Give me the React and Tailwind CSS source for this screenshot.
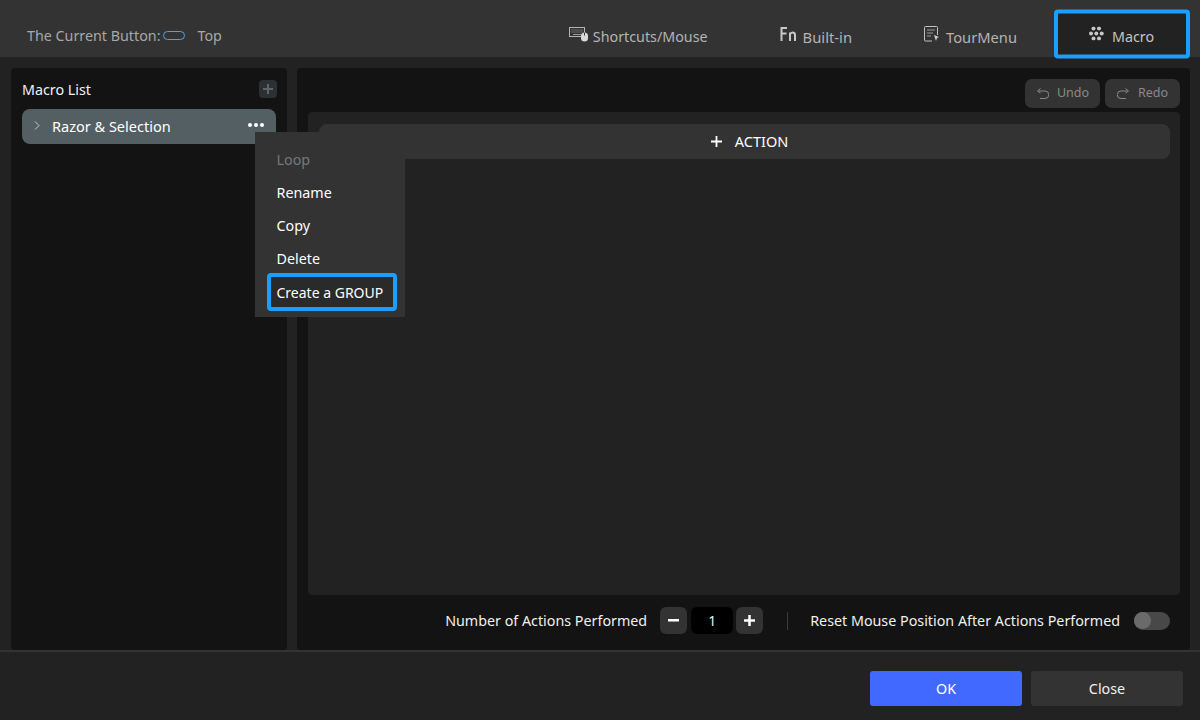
import React from "react";

const font = { fontFamily: '"Noto Sans", "Open Sans", sans-serif' };

function KeyboardMouseIcon() {
  return (
    <svg width="19" height="15" viewBox="0 0 19 15" fill="none">
      <rect x="0.5" y="0.5" width="15" height="9" fill="none" stroke="#b5b5b5" />
      <path d="M2.5 3h11M2.5 5h11" stroke="#9a9a9a" strokeDasharray="1 1" />
      <path d="M4 7.5h8" stroke="#9a9a9a" />
      <rect x="12" y="5.5" width="7" height="9" rx="3.5" fill="#d8d8d8" />
      <path d="M15.5 5.5v3" stroke="#333" />
    </svg>
  );
}

function FnIcon() {
  return (
    <svg width="17" height="14" viewBox="0 0 17 14" fill="none" stroke="#c8c8c8" strokeWidth="2">
      <path d="M1.5 14V1h5.500M1.500 6.500h5" />
      <path d="M10 14V5.500M10 7.500c0.500-1.300 1.400-2 2.700-2 1.600 0 2.300 1 2.300 2.500v6" />
    </svg>
  );
}

function TourIcon() {
  return (
    <svg width="16" height="16" viewBox="0 0 16 16" fill="none">
      <path d="M8 15H1.500a1 1 0 0 1-1-1V1.500a1 1 0 0 1 1-1h11a1 1 0 0 1 1 1V9" stroke="#c0c0c0" />
      <path d="M3 4h8M3 7h6M3 10h4" stroke="#9a9a9a" />
      <path d="M10 9l5 2-2 1-1 3z" fill="#d0d0d0" />
    </svg>
  );
}

function MacroIcon() {
  return (
    <svg width="15" height="14" viewBox="0 0 15 14" fill="#c8c8c8">
      <circle cx="4.500" cy="2" r="2" />
      <circle cx="10" cy="2" r="2" />
      <circle cx="2" cy="7" r="2" />
      <circle cx="7.300" cy="7" r="2" />
      <circle cx="12.700" cy="7" r="2" />
      <circle cx="4.500" cy="12" r="2" />
      <circle cx="10" cy="12" r="2" />
    </svg>
  );
}

function UndoIcon({ flip }) {
  return (
    <svg width="13" height="12" viewBox="0 0 13 12" fill="none" stroke="#8a8a8a" className={flip ? "-scale-x-100" : ""}>
      <path d="M3 3h6a3 3 0 0 1 0 7.500H4" />
      <path d="M4.500 0.500L1.500 3l3 2" />
    </svg>
  );
}

function Tab({ icon, label, gap, className }) {
  return (
    <div className={`flex translate-y-[1px] items-center text-[#b4b4b4] ${gap} ${className}`}>
      <span className="flex -translate-y-[3px]">{icon}</span>
      <span>{label}</span>
    </div>
  );
}

function Dots() {
  return (
    <div className="flex gap-[2px]">
      <span className="size-[4px] rounded-full bg-white" />
      <span className="size-[4px] rounded-full bg-white" />
      <span className="size-[4px] rounded-full bg-white" />
    </div>
  );
}

export default function App() {
  return (
    <div className="relative flex h-[720px] w-[1200px] flex-col overflow-hidden bg-[#222222] text-white" style={font}>
      <header className="flex h-[57px] shrink-0 items-center bg-[#333333] pt-[15px] pl-[27px] pr-[10px]">
        <div className="flex items-center text-[14.3px] text-[#a8a8a8]">
          <span>The Current Button:</span>
          <span className="ml-[2px] -translate-y-[1px] h-[9px] w-[22px] rounded-full border border-[#4aa3e8]" />
          <span className="ml-[13px]">Top</span>
        </div>
        <div className="ml-auto flex items-center">
          <Tab icon={<KeyboardMouseIcon />} label="Shortcuts/Mouse" gap="gap-[5px]" className="mr-[72px] text-[14.3px]" />
          <Tab icon={<FnIcon />} label="Built-in" gap="gap-[6px]" className="mr-[72px] text-[14.8px]" />
          <Tab icon={<TourIcon />} label="TourMenu" gap="gap-[6px]" className="mr-[37px] text-[14.7px]" />
          <div className="flex h-[49px] w-[136px] -translate-y-[2.5px] items-center justify-center gap-[8px] rounded-[4px] border-[4px] border-[#1a9fff] bg-[#222222] pt-[5px] pr-[1px] text-[14.3px] text-[#c4c4c4]">
            <span className="flex -translate-y-[3px]"><MacroIcon /></span>
            <span>Macro</span>
          </div>
        </div>
      </header>

      <main className="flex h-[593px] shrink-0 gap-[10px] px-[10px] pt-[11px] pb-[1px]">
        <aside className="relative h-[582px] w-[276px] shrink-0 rounded-[4px] bg-[#131313] ml-[1px] px-[11px]">
          <div className="flex h-[41px] items-center justify-between pt-[2px] text-[14.3px]">
            <span className="text-[#f0f0f0]">Macro List</span>
            <span className="-mr-[1px] -translate-y-[1px] flex size-[18px] items-center justify-center rounded-[4px] bg-[#2a3033]">
              <svg width="12" height="12" viewBox="0 0 12 12" stroke="#5f666a" strokeWidth="2"><path d="M6 1v10M1 6h10" /></svg>
            </span>
          </div>
          <div className="flex h-[35px] w-[254px] items-center rounded-[8px] bg-[#535f63] pl-[12px] pr-[12px] pt-[1px] text-[14.5px]">
            <svg width="6" height="9" viewBox="0 0 6 9" fill="none" stroke="#c4c9cb" className="-translate-y-[2px]"><path d="M1 0.500l4 4-4 4" /></svg>
            <span className="ml-[12px] text-white">Razor &amp; Selection</span>
            <span className="ml-auto -translate-y-[2px]"><Dots /></span>
          </div>
        </aside>

        <section className="flex h-[582px] min-w-0 flex-1 flex-col rounded-[4px] bg-[#131313] pl-[11px] pr-[10px]">
          <div className="flex h-[44px] shrink-0 items-center justify-end gap-[5px] pt-[6px]">
            <div className="flex h-[29px] w-[75px] items-center justify-center gap-[8px] rounded-[7px] bg-[#333333] pt-[1px] text-[12.5px] text-[#8a8a8a]"><UndoIcon /><span>Undo</span></div>
            <div className="flex h-[29px] w-[75px] items-center justify-center gap-[8px] rounded-[7px] bg-[#333333] pt-[1px] text-[12.5px] text-[#8a8a8a]"><UndoIcon flip /><span>Redo</span></div>
          </div>
          <div className="h-[483px] shrink-0 rounded-[4px] bg-[#222222] pl-[11px] pr-[10px] pt-[12px]">
            <div className="flex h-[35px] items-center justify-center gap-[13px] rounded-[8px] bg-[#333333] pl-[10px] text-[14.5px]">
              <svg width="11" height="11" viewBox="0 0 11 11" stroke="#ffffff" strokeWidth="1.800"><path d="M5.500 0v11M0 5.500h11" /></svg>
              <span>ACTION</span>
            </div>
          </div>
          <div className="flex flex-1 items-center justify-end pr-[10px] pb-[4px] text-[14.3px] text-[#f0f0f0]">
            <span>Number of Actions Performed</span>
            <span className="ml-[13px] flex size-[27px] items-center justify-center rounded-[6px] bg-[#333333]">
              <svg width="11" height="3" viewBox="0 0 11 3"><rect width="11" height="2.500" fill="#ffffff" /></svg>
            </span>
            <span className="ml-[4px] mr-[3px] flex h-[27px] w-[42px] items-center justify-center rounded-[6px] bg-black text-[14px]">1</span>
            <span className="flex size-[27px] items-center justify-center rounded-[6px] bg-[#333333]">
              <svg width="11" height="11" viewBox="0 0 11 11" stroke="#ffffff" strokeWidth="2.500"><path d="M5.500 0v11M0 5.500h11" /></svg>
            </span>
            <span className="ml-[24px] mr-[22px] h-[18px] w-[1px] bg-[#3a3a3a]" />
            <span>Reset Mouse Position After Actions Performed</span>
            <span className="ml-[14px] flex h-[18px] w-[36px] items-center rounded-full bg-[#484848]">
              <span className="size-[17px] rounded-full bg-[#6a6a6a]" />
            </span>
          </div>
        </section>
      </main>

      <footer className="flex flex-1 items-start justify-end gap-[9px] border-t-2 border-[#333333] pt-[19px] pr-[17px]">
        <button className="h-[35px] w-[152px] rounded-[3px] bg-[#4169ff] pt-[1px] text-[14.3px] text-white">OK</button>
        <button className="h-[35px] w-[152px] rounded-[3px] bg-[#333333] pt-[1px] text-[14.3px] text-[#f0f0f0]">Close</button>
      </footer>

      <div className="absolute top-[132px] left-[255px] flex h-[185px] w-[150px] flex-col bg-[#333333] pt-[11px] text-[14.3px]">
        <div className="flex h-[33px] items-center pl-[21.5px] text-[#777777]">Loop</div>
        <div className="flex h-[33px] items-center pl-[21.5px]">Rename</div>
        <div className="flex h-[33px] items-center pl-[21.5px]">Copy</div>
        <div className="flex h-[33px] items-center pl-[21.5px]">Delete</div>
        <div className="ml-[12px] -mt-[2px] flex h-[38px] w-[130px] items-center rounded-[4px] border-[4px] border-[#1a9fff] bg-[#2a2a2a] pl-[5.5px] text-[14px] whitespace-nowrap">Create a GROUP</div>
      </div>
    </div>
  );
}
